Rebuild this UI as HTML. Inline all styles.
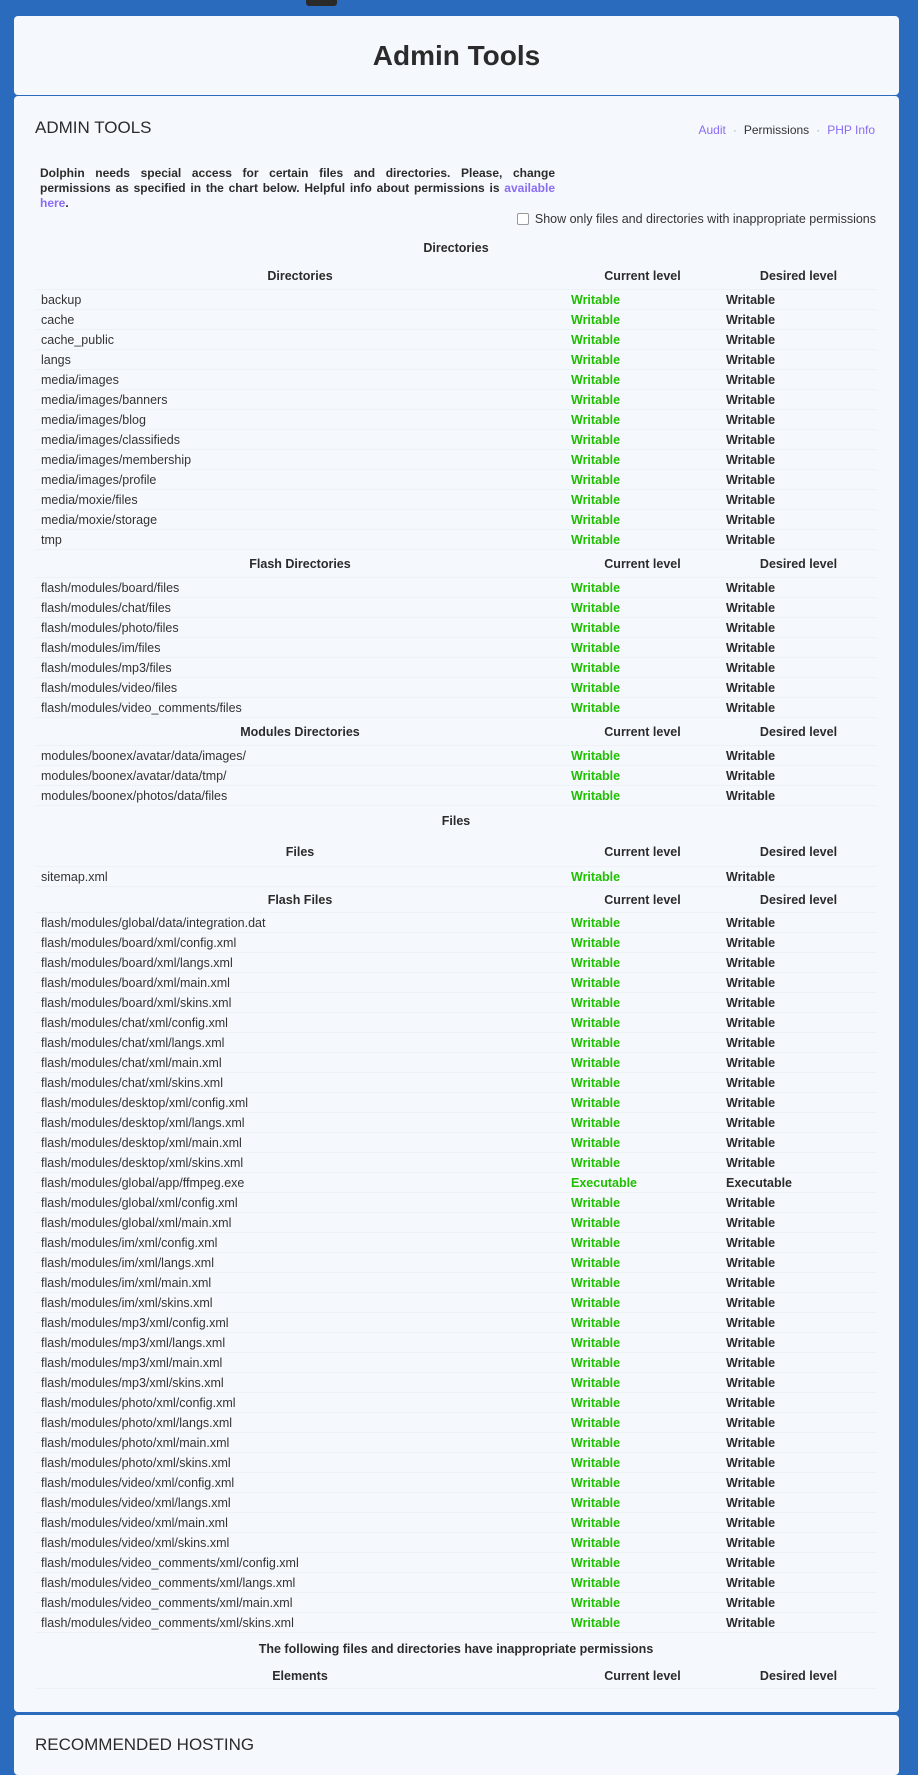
<!DOCTYPE html>
<html><head><meta charset="utf-8"><style>
*{margin:0;padding:0;box-sizing:border-box}
body{width:918px;height:1761px;background:#2a6bbd;font-family:"Liberation Sans",sans-serif;color:#333;position:relative;overflow:hidden}
.tab{position:absolute;left:306px;top:0;width:31px;height:6px;background:#2a2a2a;border-radius:0 0 3px 3px}
.card{position:absolute;left:14px;width:885px;background:#f5f8fc;border-radius:4px}
.h1{top:16px;height:79px;text-align:center;font-weight:bold;font-size:28px;line-height:79px;color:#2b2b2b}
.c2{top:96px;height:1616px}
.c3{top:1715px;height:60px}
.ttl{position:absolute;left:21px;font-size:17px;color:#2b2b2b}
.links{position:absolute;right:24px;top:27px;font-size:12px;color:#333}
.links a{color:#8a6cf5;text-decoration:none}
.links span.d{color:#aaa;margin:0 7px}
.para{position:absolute;left:26px;top:70px;width:515px;font-size:12px;font-weight:bold;line-height:15px;text-align:justify;color:#2b2b2b}
.para a{color:#8a6cf5;text-decoration:none}
.chk{position:absolute;right:23px;top:116px;font-size:12.5px;color:#333}
.chk i{display:inline-block;width:12px;height:12px;border:1px solid #999;border-radius:2px;background:#fff;vertical-align:-2px;margin-right:6px}
.r{position:absolute;left:21px;width:842px;display:flex;font-size:12.5px;align-items:center;border-bottom:1px solid #eef2f7}
.r div{padding-left:6px}
.r .a{width:530px}.r .b{width:155px}.r .c{width:157px}
.r .b{color:#1ec000;font-weight:bold}.r .c{font-weight:bold;color:#2b2b2b}
.hd{font-weight:bold;color:#2b2b2b}
.hd div{text-align:center;padding:0}
.hd .b{color:#2b2b2b}
.cap{position:absolute;left:21px;width:842px;text-align:center;font-weight:bold;font-size:12.5px;color:#2b2b2b}
</style></head><body>
<div class="tab"></div>
<div class="card h1">Admin Tools</div>
<div class="card c2" id="c2">
<div class="ttl" style="top:22px">ADMIN TOOLS</div>
<div class="links"><a>Audit</a><span class="d">·</span>Permissions<span class="d">·</span><a>PHP Info</a></div>
<div class="para">Dolphin needs special access for certain files and directories. Please, change permissions as specified in the chart below. Helpful info about permissions is <a>available here</a>.</div>
<div class="chk"><i></i>Show only files and directories with inappropriate permissions</div>
</div>
<div class="card c3"><div class="ttl" style="top:20px">RECOMMENDED HOSTING</div></div>
<script>
var c=document.getElementById('c2');var off=96;var h='';
function cap(t,y,hh){h+='<div class="cap" style="top:'+(y-off)+'px;height:'+hh+'px;line-height:'+hh+'px">'+t+'</div>';}
function hd(t,y,hh){h+='<div class="r hd" style="top:'+(y-off)+'px;height:'+hh+'px"><div class="a">'+t+'</div><div class="b">Current level</div><div class="c">Desired level</div></div>';return y+hh;}
function rows(list,y){list.forEach(function(n){var v='Writable';if(n.indexOf('ffmpeg')>=0)v='Executable';h+='<div class="r" style="top:'+(y-off)+'px;height:20px"><div class="a">'+n+'</div><div class="b">'+v+'</div><div class="c">'+v+'</div></div>';y+=20;});return y;}
cap('Directories',236,24);
var y=hd('Directories',262,28);
y=rows(['backup','cache','cache_public','langs','media/images','media/images/banners','media/images/blog','media/images/classifieds','media/images/membership','media/images/profile','media/moxie/files','media/moxie/storage','tmp'],290);
y=hd('Flash Directories',550,28);
y=rows(['flash/modules/board/files','flash/modules/chat/files','flash/modules/photo/files','flash/modules/im/files','flash/modules/mp3/files','flash/modules/video/files','flash/modules/video_comments/files'],578);
y=hd('Modules Directories',718,28);
y=rows(['modules/boonex/avatar/data/images/','modules/boonex/avatar/data/tmp/','modules/boonex/photos/data/files'],746);
cap('Files',806,30);
y=hd('Files',838,29);
y=rows(['sitemap.xml'],867);
y=hd('Flash Files',887,26);
var ff=['flash/modules/global/data/integration.dat'];
['board','chat','desktop'].forEach(function(m){['config','langs','main','skins'].forEach(function(x){ff.push('flash/modules/'+m+'/xml/'+x+'.xml');});});
ff.push('flash/modules/global/app/ffmpeg.exe','flash/modules/global/xml/config.xml','flash/modules/global/xml/main.xml');
['im','mp3','photo','video','video_comments'].forEach(function(m){['config','langs','main','skins'].forEach(function(x){ff.push('flash/modules/'+m+'/xml/'+x+'.xml');});});
y=rows(ff,913);
cap('The following files and directories have inappropriate permissions',1635,28);
hd('Elements',1663,26);
c.insertAdjacentHTML('beforeend',h);
</script>
</body></html>
